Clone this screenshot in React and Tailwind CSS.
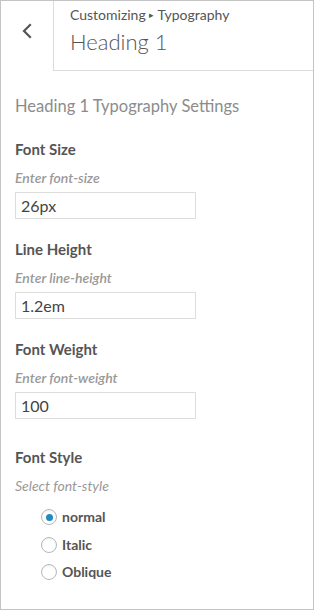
import React, { useState } from 'react';

const FIELDS = [
  { id: 'size', label: 'Font Size', hint: 'Enter font-size', value: '26px' },
  { id: 'line', label: 'Line Height', hint: 'Enter line-height', value: '1.2em' },
  { id: 'weight', label: 'Font Weight', hint: 'Enter font-weight', value: '100' }
];

const STYLES = ['normal', 'Italic', 'Oblique'];

function App() {
  const [values, setValues] = useState(() =>
    Object.fromEntries(FIELDS.map((f) => [f.id, f.value]))
  );
  const [fontStyle, setFontStyle] = useState('normal');

  return (
    <div
      className="w-[314px] h-[610px] border border-[#c4c4c4] bg-white text-[#555] overflow-hidden"
      style={{ fontFamily: 'Lato, "Open Sans", sans-serif' }}
    >
      {/* header */}
      <div className="flex h-[70px]">
        <button
          type="button"
          className="w-[52px] shrink-0 flex items-start justify-center pt-[22px] text-[#555]"
        >
          <svg width="12" height="16" viewBox="0 0 12 16" fill="none">
            <path d="M9 2 L3 8 L9 14" stroke="currentColor" strokeWidth="2.2" strokeLinecap="square" />
          </svg>
        </button>
        <div className="flex-1 border-l border-b border-[#dcdcdc] pl-4 pt-[4px]">
          <div className="text-[14px] leading-5 text-[#555]">
            Customizing <span className="text-[9px] align-[2px]">▸</span> Typography
          </div>
          <div className="text-[22px] leading-[28px] font-light text-[#555] mt-[3px]">Heading 1</div>
        </div>
      </div>

      {/* body */}
      <div className="px-[14px] pt-[25px]">
        <h2 className="text-[16.5px] leading-5 text-[#8c8c8c] mb-[23px]">Heading 1 Typography Settings</h2>

        {FIELDS.map((field) => (
          <div key={field.id} className="mb-[20px]">
            <div className="text-[15px] leading-5 font-bold text-[#555]">{field.label}</div>
            <div className="text-[14px] leading-[18px] italic font-semibold text-[#999] mt-[10px]">{field.hint}</div>
            <input
              value={values[field.id]}
              onChange={(e) => setValues((v) => ({ ...v, [field.id]: e.target.value }))}
              className="mt-[5px] block w-[181px] h-[27px] border border-[#ddd] px-[5px] text-[16px] text-[#444] bg-white focus:outline-none"
            />
          </div>
        ))}

        <div className="pt-[8px]">
          <div className="text-[15px] leading-5 font-bold text-[#555]">Font Style</div>
          <div className="text-[14px] leading-[18px] italic text-[#999] mt-[10px]">Select font-style</div>
          <div className="mt-[14px] pl-[26px] flex flex-col gap-[11.5px]">
            {STYLES.map((s) => (
              <label key={s} className="flex items-center gap-[5px] h-4 cursor-pointer">
                <span
                  onClick={() => setFontStyle(s)}
                  className="w-[16px] h-[16px] rounded-full border border-[#b4b9be] bg-white flex items-center justify-center shadow-[inset_0_1px_2px_rgba(0,0,0,0.07)]"
                >
                  {fontStyle === s && <span className="w-[7px] h-[7px] rounded-full bg-[#1e8cbe]" />}
                </span>
                <span className="text-[14px] leading-4 font-bold text-[#555]">{s}</span>
              </label>
            ))}
          </div>
        </div>
      </div>
    </div>
  );
}

export default App;
